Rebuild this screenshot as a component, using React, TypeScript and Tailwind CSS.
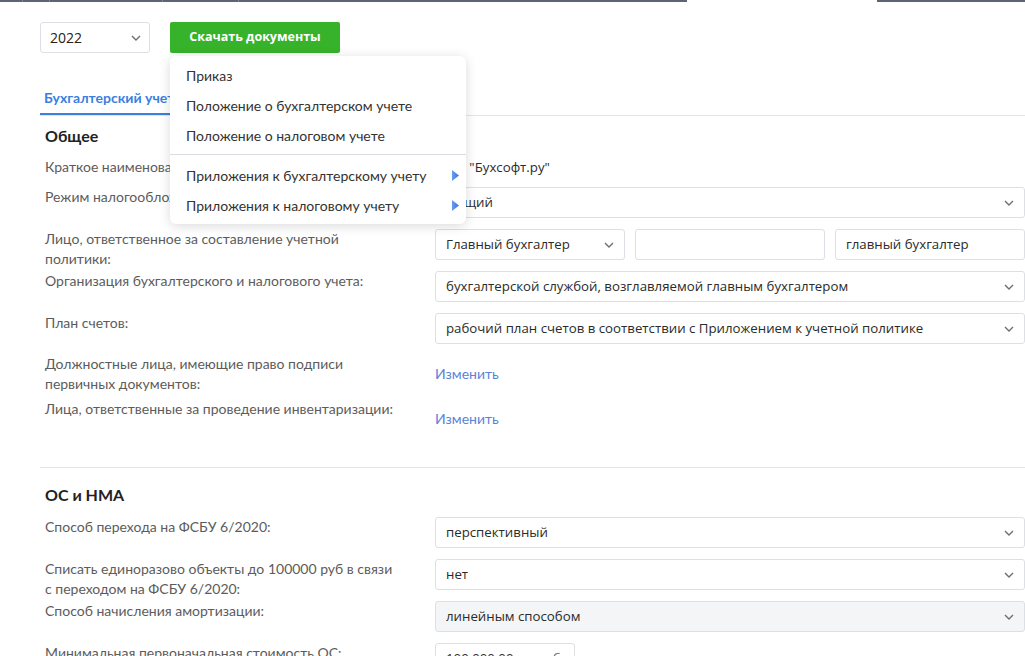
import React from "react";

const labelFont = { fontFamily: "Lato, 'Noto Sans', sans-serif" };
const inputFont = { fontFamily: "'Open Sans', 'Noto Sans', sans-serif" };

function Chevron() {
  return (
    <svg width="10" height="6" viewBox="0 0 10 6" className="shrink-0">
      <path d="M1 1l4 4 4-4" fill="none" stroke="#6b6f75" strokeWidth="1.4" />
    </svg>
  );
}

function Select({ value, disabled = false, className = "" }: { value: string; disabled?: boolean; className?: string }) {
  return (
    <div
      style={inputFont}
      className={`h-[31px] flex items-center justify-between pl-[10px] pr-[10px] border border-[#dcdfe4] rounded-[3px] text-[13.25px] text-[#2b2b2b] ${disabled ? "bg-[#f4f5f7]" : "bg-white"} ${className}`}
    >
      <span className="truncate">{value}</span>
      <Chevron />
    </div>
  );
}

function Input({ value = "", className = "" }: { value?: string; className?: string }) {
  return (
    <div
      style={inputFont}
      className={`h-[31px] flex items-center pl-[10px] border border-[#dcdfe4] rounded-[3px] text-[13.25px] text-[#2b2b2b] bg-white ${className}`}
    >
      {value}
    </div>
  );
}

function Label({ children }: { children: React.ReactNode }) {
  return (
    <div style={labelFont} className="w-[395px] shrink-0 pl-[5px] pr-[40px] text-[14px] leading-[20px] text-[#5c5c5c]">
      {children}
    </div>
  );
}

function Row({ label, children, className = "" }: { label: React.ReactNode; children: React.ReactNode; className?: string }) {
  return (
    <div className={`flex items-start ${className}`}>
      <Label>{label}</Label>
      <div className="flex-1">{children}</div>
    </div>
  );
}

function LinkRow({ label, className = "" }: { label: React.ReactNode; className?: string }) {
  return (
    <div className={`flex items-start ${className}`}>
      <Label>{label}</Label>
      <div style={labelFont} className="h-[38px] flex items-center text-[14px] text-[#5a82d9]">
        Изменить
      </div>
    </div>
  );
}

function Triangle() {
  return (
    <svg width="7" height="11" viewBox="0 0 7 11">
      <defs>
        <linearGradient id="tri" x1="0" y1="0" x2="1" y2="0">
          <stop offset="0" stopColor="#6a9cf0" />
          <stop offset="1" stopColor="#3a74de" />
        </linearGradient>
      </defs>
      <path d="M0 0l7 5.5L0 11z" fill="url(#tri)" />
    </svg>
  );
}

function Menu() {
  const item = "h-[30px] flex items-center justify-between pl-[16px] pr-[7px] text-[14px] text-[#333]";
  return (
    <div
      style={labelFont}
      className="absolute left-0 top-[34px] w-[296px] bg-white rounded-[6px] shadow-[0_2px_12px_rgba(0,0,0,0.15)] py-[4px] z-10"
    >
      <div className={item}>Приказ</div>
      <div className={item}>Положение о бухгалтерском учете</div>
      <div className={item}>Положение о налоговом учете</div>
      <div className="h-px bg-[#d9dce1] mt-[4px] mb-[5px]" />
      <div className={item}>
        <span>Приложения к бухгалтерскому учету</span>
        <Triangle />
      </div>
      <div className={item}>
        <span>Приложения к налоговому учету</span>
        <Triangle />
      </div>
    </div>
  );
}

export default function App() {
  return (
    <div className="w-[1025px] h-[656px] overflow-hidden bg-white relative">
      <div className="flex h-[2px]">
        <div className="w-[22px] bg-[#5a6474]" />
        <div className="w-px bg-[#7a838f]" />
        <div className="w-[26px] bg-[#5a6474]" />
        <div className="w-px bg-[#7a838f]" />
        <div className="w-[112px] bg-[#5a6474]" />
        <div className="w-px bg-[#7a838f]" />
        <div className="w-[75px] bg-[#5a6474]" />
        <div className="w-px bg-[#7a838f]" />
        <div className="w-[448px] bg-[#5a6474]" />
        <div className="w-[190px]" />
        <div className="flex-1 bg-[#5a6474]" />
      </div>

      <div className="pl-[40px]">
        <div className="flex items-start gap-[20px] mt-[20px]">
          <div
            style={inputFont}
            className="w-[110px] h-[31px] flex items-center justify-between pl-[9px] pr-[8px] border border-[#dcdfe4] rounded-[3px] text-[14px] text-[#222]"
          >
            <span>2022</span>
            <Chevron />
          </div>
          <div className="relative">
            <div
              style={inputFont}
              className="w-[170px] h-[31px] flex items-center justify-center bg-[#36b22b] rounded-[2px] text-white text-[12.5px] font-bold"
            >
              Скачать документы
            </div>
            <Menu />
          </div>
        </div>

        <div className="flex mt-[29px] border-b border-[#e3e5e8]">
          <div
            style={labelFont}
            className="px-[4px] h-[33px] flex items-center text-[14px] font-bold text-[#3b7fe0] border-b-2 border-[#3b7fe0] -mb-px w-[150px]"
          >
            Бухгалтерский учет
          </div>
          <div style={labelFont} className="px-[10px] h-[33px] flex items-center text-[14px] text-[#555]">
            Налоговый учет
          </div>
        </div>

        <div style={labelFont} className="mt-[10px] pl-[5px] h-[20px] leading-[20px] text-[16px] font-bold text-[#222]">
          Общее
        </div>

        <div className="flex items-start mt-[11px]">
          <Label>Краткое наименование:</Label>
          <div style={inputFont} className="text-[13.25px] leading-[20px] text-[#2b2b2b]">
            ООО "Бухсофт.ру"
          </div>
        </div>

        <Row label="Режим налогообложения:" className="mt-[10px]">
          <Select value="Общий" />
        </Row>

        <Row label="Лицо, ответственное за составление учетной политики:" className="mt-[11px]">
          <div className="flex gap-[10px]">
            <Select value="Главный бухгалтер" className="w-[190px]" />
            <Input className="w-[190px]" />
            <Input value="главный бухгалтер" className="flex-1" />
          </div>
        </Row>

        <Row label="Организация бухгалтерского и налогового учета:" className="mt-[2px]">
          <Select value="бухгалтерской службой, возглавляемой главным бухгалтером" />
        </Row>

        <Row label="План счетов:" className="mt-[11px]">
          <Select value="рабочий план счетов в соответствии с Приложением к учетной политике" />
        </Row>

        <LinkRow label="Должностные лица, имеющие право подписи первичных документов:" className="mt-[10px]" />
        <LinkRow label="Лица, ответственные за проведение инвентаризации:" className="mt-[5px]" />

        <div className="h-px bg-[#e3e5e8] mt-[30px]" />

        <div style={labelFont} className="mt-[17px] pl-[5px] h-[20px] leading-[20px] text-[16px] font-bold text-[#222]">
          ОС и НМА
        </div>

        <Row label="Способ перехода на ФСБУ 6/2020:" className="mt-[12px]">
          <Select value="перспективный" />
        </Row>

        <Row label="Списать единоразово объекты до 100000 руб в связи с переходом на ФСБУ 6/2020:" className="mt-[11px]">
          <Select value="нет" />
        </Row>

        <Row label="Способ начисления амортизации:" className="mt-[2px]">
          <Select value="линейным способом" disabled />
        </Row>

        <Row label="Минимальная первоначальная стоимость ОС:" className="mt-[11px]">
          <div
            style={inputFont}
            className="w-[140px] h-[31px] flex items-center justify-between px-[10px] border border-[#dcdfe4] rounded-[3px] text-[13.25px] text-[#2b2b2b]"
          >
            <span>100 000,00</span>
            <span className="text-[#666]">руб.</span>
          </div>
        </Row>
      </div>
    </div>
  );
}
